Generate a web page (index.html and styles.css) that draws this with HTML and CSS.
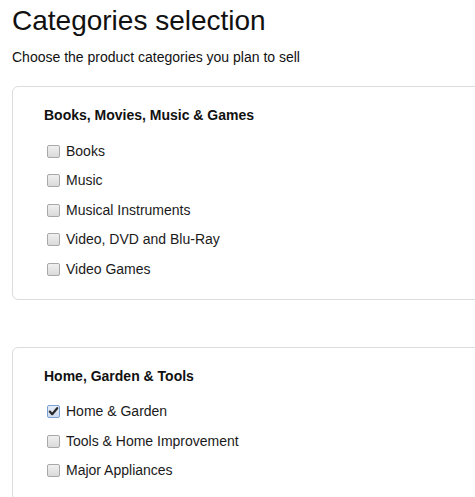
FILE: index.html
```html
<!DOCTYPE html>
<html>
<head>
<meta charset="utf-8">
<link rel="stylesheet" href="styles.css">
</head>
<body>
<h1 class="title">Categories selection</h1>
<p class="subtitle">Choose the product categories you plan to sell</p>

<section class="card">
  <h2 class="card-title">Books, Movies, Music &amp; Games</h2>
  <ul class="options">
    <li class="opt"><span class="box"></span>Books</li>
    <li class="opt"><span class="box"></span>Music</li>
    <li class="opt"><span class="box"></span>Musical Instruments</li>
    <li class="opt"><span class="box"></span>Video, DVD and Blu-Ray</li>
    <li class="opt"><span class="box"></span>Video Games</li>
  </ul>
</section>

<section class="card">
  <h2 class="card-title">Home, Garden &amp; Tools</h2>
  <ul class="options">
    <li class="opt"><span class="box checked"><svg viewBox="0 0 13 13" width="13" height="13"><path d="M2.8 6.6 L5.2 9.2 L10.2 3.2" fill="none" stroke="#2b2b2b" stroke-width="2.2" stroke-linecap="round" stroke-linejoin="round"/></svg></span>Home &amp; Garden</li>
    <li class="opt"><span class="box"></span>Tools &amp; Home Improvement</li>
    <li class="opt"><span class="box"></span>Major Appliances</li>
  </ul>
</section>
</body>
</html>
```
FILE: styles.css
```css
html {
  overflow: hidden;
}
body {
  margin: 0;
  padding: 0 12px;
  font-family: "Liberation Sans", Arial, sans-serif;
  color: #1a1a1a;
  background: #fff;
}
.title {
  margin: 5px 0 0;
  font-size: 28px;
  line-height: 32px;
  font-weight: normal;
  color: #111;
}
.subtitle {
  margin: 12px 0 0;
  font-size: 14px;
  line-height: 16px;
  color: #111;
}
.card {
  margin: 21px -30px 47px 0;
  border: 1px solid #dcdcdc;
  border-radius: 6px;
  padding: 20px 31px 14px;
}
.card-title {
  margin: 0;
  font-size: 14px;
  line-height: 16px;
  font-weight: bold;
  color: #111;
}
.options {
  list-style: none;
  margin: 13px 0 0;
  padding: 0 0 1px;
}
.opt {
  display: flex;
  align-items: center;
  height: 29.5px;
  font-size: 14px;
  color: #1a1a1a;
}
.box {
  box-sizing: border-box;
  width: 13px;
  height: 13px;
  margin: 1px 6px 0 3px;
  border: 1px solid #a8a8a8;
  border-radius: 2px;
  background: linear-gradient(#f0f0f0, #dadada);
  display: flex;
}
.box.checked {
  border-color: #7aa0d4;
  background: linear-gradient(#e6edf7, #cfdcef);
}
.box svg {
  margin: -1px;
}
```
